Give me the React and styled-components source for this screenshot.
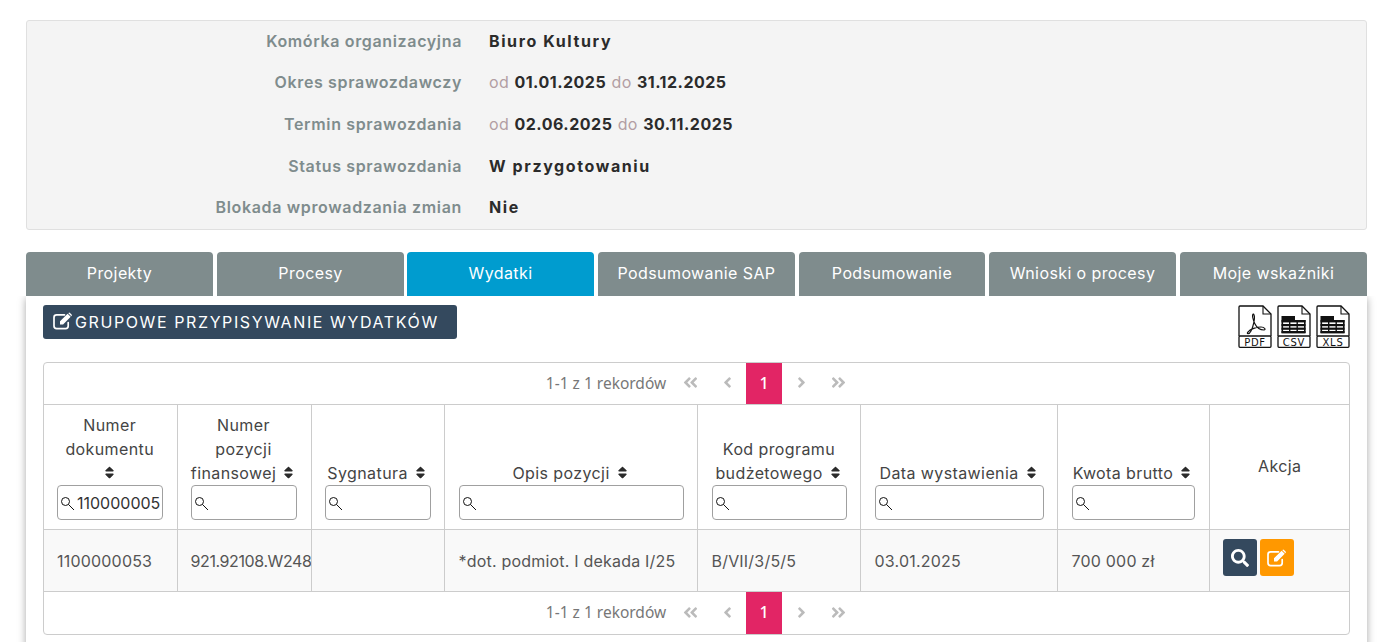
import styled, { createGlobalStyle } from "styled-components";
import {
  FaSort,
  FaSearch,
  FaAngleLeft,
  FaAngleRight,
  FaAngleDoubleLeft,
  FaAngleDoubleRight,
} from "react-icons/fa";

const GlobalStyle = createGlobalStyle`
  html, body {
    margin: 0;
    height: 100%;
    overflow: hidden;
    background: #fff;
  }
  body {
    font-family: Inter, "Liberation Sans", sans-serif;
    font-size: 16px;
    color: #444;
  }
`;

const Page = styled.div`
  padding: 20px 16px 0 26px;
`;

const InfoPanel = styled.div`
  background: #f4f4f4;
  border: 1px solid #e0e0e0;
  border-radius: 3px;
  height: 210px;
  box-sizing: border-box;
  display: grid;
  grid-template-rows: 40px 42px 42px 42px 40px;
`;

const InfoRow = styled.div`
  display: grid;
  grid-template-columns: 435px 1fr;
  column-gap: 27px;
  align-items: center;
`;

const InfoLabel = styled.div`
  text-align: right;
  font-weight: 600;
  color: #7f8c8d;
  letter-spacing: 0.65px;
`;

const InfoValue = styled.div`
  font-weight: 700;
  color: #2b2b2b;
  letter-spacing: 1.6px;
`;

const DateValue = styled.span`
  letter-spacing: 0.5px;
`;

const Muted = styled.span`
  font-weight: 400;
  color: #b29ea3;
  letter-spacing: 0.3px;
`;

const Tabs = styled.div`
  display: grid;
  grid-template-columns: 187px 187px 186px 197px 186px 187px 187px;
  column-gap: 4px;
  margin-top: 22px;
`;

const Tab = styled.div`
  height: 44px;
  box-sizing: border-box;
  padding-bottom: 2px;
  border-radius: 4px 4px 0 0;
  background: ${(props) => (props.$active ? "#009ccf" : "#7f8c8d")};
  color: #fff;
  letter-spacing: 0.4px;
  display: flex;
  align-items: center;
  justify-content: center;
  margin-left: ${(props) => (props.$active ? "-1px" : "0")};
`;

const Card = styled.div`
  background: #fff;
  padding: 9px 17px 40px;
  box-shadow: 0 2px 8px rgba(0, 0, 0, 0.35);
  clip-path: inset(0 -12px -12px -12px);
`;

const Toolbar = styled.div`
  display: flex;
  justify-content: space-between;
  align-items: flex-start;
  height: 57px;
`;

const GroupButton = styled.button`
  display: flex;
  align-items: center;
  gap: 2px;
  width: 414px;
  height: 34px;
  box-sizing: border-box;
  padding: 0 0 0 10px;
  border: 0;
  border-radius: 3px;
  background: #34495e;
  color: #fff;
  font: inherit;
  letter-spacing: 1.6px;
  text-transform: uppercase;
  svg {
    margin-bottom: 3px;
  }
`;

const ExportIcons = styled.div`
  display: flex;
  gap: 5px;
`;

const TableBox = styled.div`
  border: 1px solid #ccc;
  border-radius: 4px;
  height: 273px;
  box-sizing: border-box;
  overflow: hidden;
`;

const Pager = styled.div`
  display: flex;
  justify-content: center;
  align-items: stretch;
  gap: 1px;
  height: ${(props) => props.$height}px;
  padding-left: 9px;
  font-family: "Noto Sans", "Open Sans", sans-serif;
  font-size: 15.5px;
  color: #777;
`;

const PagerInfo = styled.div`
  display: flex;
  align-items: center;
  margin-right: 5px;
  padding-bottom: 2px;
`;

const PageLink = styled.div`
  width: 36px;
  box-sizing: border-box;
  padding-bottom: 2px;
  display: flex;
  align-items: center;
  justify-content: center;
  color: ${(props) => (props.$active ? "#fff" : "#bbb")};
  background: ${(props) => (props.$active ? "#e22565" : "transparent")};
  font-size: ${(props) => (props.$active ? 16 : 17)}px;
  font-weight: ${(props) => (props.$active ? 500 : 400)};
`;

const Table = styled.table`
  width: 100%;
  table-layout: fixed;
  border-collapse: collapse;
`;

const Th = styled.th`
  height: 124px;
  box-sizing: border-box;
  border: 1px solid #ccc;
  border-left: 0;
  padding: 8px ${(props) => props.$right || 13}px 9px ${(props) => props.$left || 13}px;
  padding-bottom: ${(props) => (props.$middle ? 10 : 9)}px;
  font-weight: 400;
  line-height: 24px;
  letter-spacing: 0.4px;
  text-align: center;
  vertical-align: ${(props) => (props.$middle ? "middle" : "bottom")};
  color: #444;
  &:last-child {
    border-right: 0;
  }
  svg.sort {
    font-size: 15px;
    color: #2b2b2b;
    vertical-align: -1px;
  }
`;

const Td = styled.td`
  height: 62px;
  box-sizing: border-box;
  background: #f9f9f9;
  border: 1px solid #ccc;
  border-left: 0;
  padding: 0 13px 0 ${(props) => props.$left || 13}px;
  white-space: nowrap;
  overflow: hidden;
  letter-spacing: ${(props) => (props.$tight ? "-0.4px" : "0.2px")};
  color: #555;
  &:last-child {
    border-right: 0;
  }
`;

const FilterBox = styled.div`
  position: relative;
  height: 35px;
  svg {
    position: absolute;
    left: 3px;
    top: 11px;
  }
`;

const FilterInput = styled.input`
  display: block;
  width: 100%;
  height: 100%;
  box-sizing: border-box;
  padding: 0 0 0 19px;
  border: 1px solid #a0a0a0;
  border-radius: 4px;
  background: #fff;
  font: inherit;
  letter-spacing: 0;
  color: #333;
`;

const ActionGroup = styled.div`
  display: flex;
  gap: 3px;
  margin-bottom: 6px;
`;

const ActionButton = styled.button`
  width: 34px;
  height: 37px;
  padding: 0;
  border: 0;
  border-radius: 3px;
  color: #fff;
  background: ${(props) => props.$bg};
  display: flex;
  align-items: center;
  justify-content: center;
  font-size: 18px;
`;

const columns = [133, 134, 133, 253, 163, 197, 152, 141];

function EditIcon({ size }) {
  return (
    <svg width={size} height={size * 0.9} viewBox="0 0 20 18" fill="none">
      <path
        d="M15.2 10.5 V14 Q15.2 16.6 12.6 16.6 H3.6 Q1 16.6 1 14 V5.4 Q1 2.8 3.6 2.8 H11.5"
        stroke="currentColor"
        strokeWidth="1.7"
        strokeLinecap="round"
      />
      <path
        d="M7 9.3 L14.6 1.7 L17.7 4.8 L10.1 12.4 L7 12.4 Z M15.5 0.9 Q16.3 0.2 17 0.9 L18.6 2.5 Q19.2 3.2 18.6 3.9 L18.3 4.2 L15.2 1.1 Z"
        fill="currentColor"
      />
    </svg>
  );
}

function LensIcon() {
  return (
    <svg width="15" height="15" viewBox="0 0 15 15" fill="none" stroke="#111" strokeWidth="1">
      <circle cx="5.5" cy="5.5" r="4" />
      <path d="M8.5 8.5 L14 14" />
    </svg>
  );
}

function FileIcon({ label, children }) {
  return (
    <svg width="34" height="43" viewBox="0 0 34 43">
      <path
        d="M1 31 V2 Q1 1 2 1 H25 L33 9 V31"
        fill="#fff"
        stroke="#111"
        strokeWidth="1.3"
      />
      <path d="M25 1 V9 H33" fill="none" stroke="#111" strokeWidth="1.1" />
      <rect x="1" y="31" width="32" height="11.3" rx="1" fill="#fff" stroke="#111" strokeWidth="1.3" />
      {children}
      <text
        x="17"
        y="40.5"
        textAnchor="middle"
        fontFamily="'DejaVu Sans', sans-serif"
        fontSize="10"
        letterSpacing="0.7"
        fill="#111"
      >
        {label}
      </text>
    </svg>
  );
}

function SheetLines() {
  return (
    <g fill="#111" stroke="none">
      <rect x="4.5" y="11" width="13.5" height="4" />
      <rect x="4.5" y="15" width="24" height="2.4" />
      <rect x="4.5" y="19" width="24" height="2.2" />
      <rect x="4.5" y="22.6" width="24" height="2.2" />
      <rect x="4.5" y="26" width="24" height="2.4" />
      <rect x="4.5" y="15" width="1.6" height="13" />
      <rect x="12" y="15" width="1.4" height="13" />
      <rect x="19.5" y="15" width="1.4" height="13" />
      <rect x="27" y="15" width="1.6" height="13" />
    </g>
  );
}

function TablePager({ height }) {
  return (
    <Pager $height={height}>
      <PagerInfo>1-1 z 1 rekordów</PagerInfo>
      <PageLink><FaAngleDoubleLeft /></PageLink>
      <PageLink><FaAngleLeft /></PageLink>
      <PageLink $active>1</PageLink>
      <PageLink><FaAngleRight /></PageLink>
      <PageLink><FaAngleDoubleRight /></PageLink>
    </Pager>
  );
}

function FilterHead({ children, value, left, right }) {
  return (
    <Th $left={left} $right={right}>
      {children} <FaSort className="sort" />
      <FilterBox>
        <LensIcon />
        <FilterInput defaultValue={value} />
      </FilterBox>
    </Th>
  );
}

const tabs = [
  "Projekty",
  "Procesy",
  "Wydatki",
  "Podsumowanie SAP",
  "Podsumowanie",
  "Wnioski o procesy",
  "Moje wskaźniki",
];

export default function App() {
  return (
    <Page>
      <GlobalStyle />
      <InfoPanel>
        <InfoRow>
          <InfoLabel>Komórka organizacyjna</InfoLabel>
          <InfoValue>Biuro Kultury</InfoValue>
        </InfoRow>
        <InfoRow>
          <InfoLabel>Okres sprawozdawczy</InfoLabel>
          <InfoValue>
            <Muted>od</Muted> <DateValue>01.01.2025</DateValue> <Muted>do</Muted> <DateValue>31.12.2025</DateValue>
          </InfoValue>
        </InfoRow>
        <InfoRow>
          <InfoLabel>Termin sprawozdania</InfoLabel>
          <InfoValue>
            <Muted>od</Muted> <DateValue>02.06.2025</DateValue> <Muted>do</Muted> <DateValue>30.11.2025</DateValue>
          </InfoValue>
        </InfoRow>
        <InfoRow>
          <InfoLabel>Status sprawozdania</InfoLabel>
          <InfoValue>W przygotowaniu</InfoValue>
        </InfoRow>
        <InfoRow>
          <InfoLabel>Blokada wprowadzania zmian</InfoLabel>
          <InfoValue>Nie</InfoValue>
        </InfoRow>
      </InfoPanel>

      <Tabs>
        {tabs.map((tab) => (
          <Tab key={tab} $active={tab === "Wydatki"}>{tab}</Tab>
        ))}
      </Tabs>

      <Card>
        <Toolbar>
          <GroupButton>
            <EditIcon size={20} />
            Grupowe przypisywanie wydatków
          </GroupButton>
          <ExportIcons>
            <FileIcon label="PDF">
              <path
                d="M15.5 9 C13.5 9 15 15 17 19 C19 23 23 25 26 25 C28 25 27 22 23 22 C19 22 12 24 10 27 C8 29 11 30 13 26 C15 22 18 12 15.5 9 Z"
                fill="none"
                stroke="#111"
                strokeWidth="1.2"
              />
            </FileIcon>
            <FileIcon label="CSV"><SheetLines /></FileIcon>
            <FileIcon label="XLS"><SheetLines /></FileIcon>
          </ExportIcons>
        </Toolbar>

        <TableBox>
          <TablePager height={41} />
          <Table>
            <colgroup>
              {columns.map((width, i) => (
                <col key={i} style={{ width }} />
              ))}
            </colgroup>
            <thead>
              <tr>
                <FilterHead value="110000005" right={14}>Numer dokumentu</FilterHead>
                <FilterHead right={14}>Numer pozycji finansowej</FilterHead>
                <FilterHead>Sygnatura</FilterHead>
                <FilterHead left={14}>Opis pozycji</FilterHead>
                <FilterHead left={14}>Kod programu budżetowego</FilterHead>
                <FilterHead left={14}>Data wystawienia</FilterHead>
                <FilterHead left={14} right={14}>Kwota brutto</FilterHead>
                <Th $middle>Akcja</Th>
              </tr>
            </thead>
            <tbody>
              <tr>
                <Td>1100000053</Td>
                <Td $tight>921.92108.W248</Td>
                <Td />
                <Td $left={14}>*dot. podmiot. I dekada I/25</Td>
                <Td $left={14}>B/VII/3/5/5</Td>
                <Td $left={14}>03.01.2025</Td>
                <Td $left={14}>700 000 zł</Td>
                <Td>
                  <ActionGroup>
                    <ActionButton $bg="#34495e"><FaSearch /></ActionButton>
                    <ActionButton $bg="#ff9800"><EditIcon size={20} /></ActionButton>
                  </ActionGroup>
                </Td>
              </tr>
            </tbody>
          </Table>
          <TablePager height={42} />
        </TableBox>
      </Card>
    </Page>
  );
}
